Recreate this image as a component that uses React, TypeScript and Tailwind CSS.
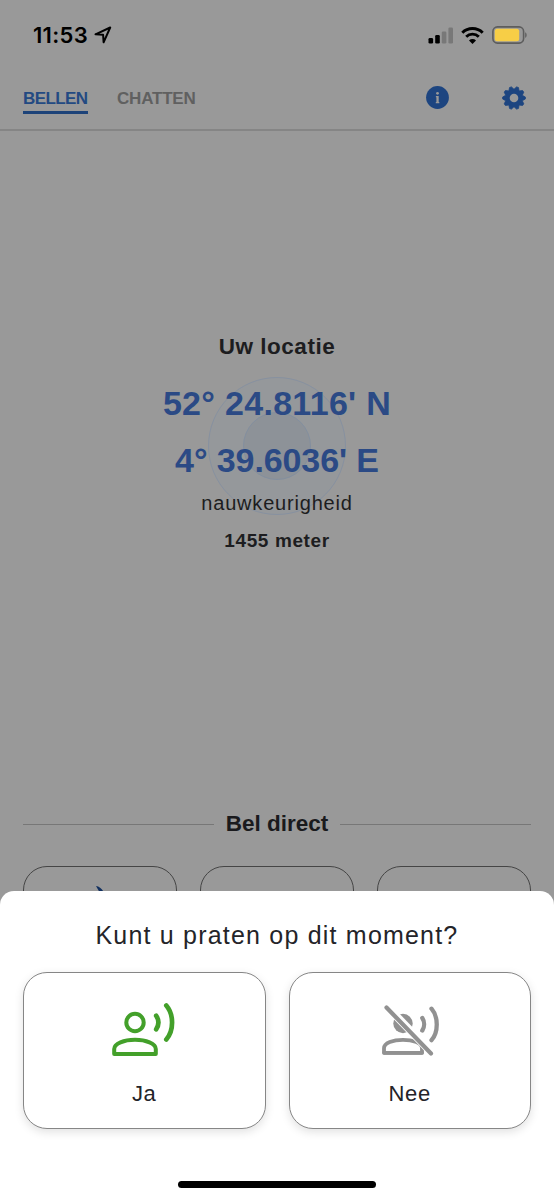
import type { ReactNode } from 'react';

const StatusBar = () => (
  <div className="flex h-[70px] items-center justify-between pl-[33px] pr-[27px] text-black">
    <div className="flex items-center gap-[6px]">
      <span className="font-[Inter,sans-serif] text-[22px] font-semibold leading-7 tracking-[0.3px]">11:53</span>
      <svg width="18" height="18" viewBox="0 0 18 18" fill="none">
        <path d="M1.5 8.3 16.2 1.5 9.6 16.3 9.1 8.8Z" stroke="currentColor" strokeWidth="2" strokeLinejoin="round" />
      </svg>
    </div>
    <div className="flex items-center gap-[8px]">
      <svg width="25" height="17" viewBox="0 0 25 17">
        <rect x="0.5" y="11" width="4.6" height="5.5" rx="1.3" />
        <rect x="7.2" y="8" width="4.6" height="8.5" rx="1.3" />
        <rect x="13.8" y="4.5" width="4.6" height="12" rx="1.3" fill="#787878" />
        <rect x="20.4" y="0.5" width="4.6" height="16" rx="1.3" fill="#787878" />
      </svg>
      <svg width="23" height="17" viewBox="0 0 23 17" fill="none">
        <path d="M1.3 5.7a14.6 14.6 0 0 1 20.4 0" stroke="currentColor" strokeWidth="3" />
        <path d="M5.2 9.7a9 9 0 0 1 12.6 0" stroke="currentColor" strokeWidth="2.9" />
        <path d="M11.5 17 8 13.4a5 5 0 0 1 7 0Z" fill="currentColor" />
      </svg>
      <svg width="35" height="18" viewBox="0 0 35 18" fill="none">
        <rect x="0.9" y="0.9" width="30.7" height="16.2" rx="4.5" stroke="#5d5d5d" strokeWidth="1.6" />
        <rect x="2.8" y="2.8" width="24.4" height="12.4" rx="2.5" fill="#f7ce46" />
        <path d="M33.2 6.2c1.9.7 1.9 4.900 0 5.6Z" fill="#5d5d5d" />
      </svg>
    </div>
  </div>
);

const point = (angle: number, radius: number) => {
  const rad = (angle * Math.PI) / 180;
  return `${(12 + radius * Math.sin(rad)).toFixed(2)},${(12 - radius * Math.cos(rad)).toFixed(2)}`;
};

// Ten teeth, 36 degrees apart
const gearPoints = Array.from({ length: 10 }, (_, i) => {
  const angle = 18 + i * 36;
  return [point(angle - 18, 8.7), point(angle - 5, 11.4), point(angle + 5, 11.4)].join(' ');
}).join(' ');

const Header = () => (
  <header className="flex h-[61px] items-start justify-between border-b-2 border-[#858585] pl-[23px] pr-[28px] text-[17px] font-bold leading-5">
    <nav className="flex gap-[29px] pt-[19px]">
      <span className="h-[25px] w-[65px] border-b-[3px] border-[#1d4379] tracking-[-0.6px] text-[#234a82]">BELLEN</span>
      <span className="tracking-[-0.2px] text-[#606060]">CHATTEN</span>
    </nav>
    <div className="flex gap-[53px] pt-[16px]">
      <svg width="24" height="24" viewBox="0 0 24 24">
        <circle cx="12.5" cy="11.5" r="11.4" fill="#1d4580" />
        <circle cx="12.5" cy="7.3" r="1.4" fill="#999" />
        <path d="M10.9 10h2.8v6h.6v1.200h-3.500v-1.200h.6v-4.800h-.5Z" fill="#999" />
      </svg>
      <svg width="24" height="24" viewBox="0 0 24 24">
        <polygon points={gearPoints} fill="#1d4580" stroke="#1d4580" strokeWidth="0.8" strokeLinejoin="round" />
        <circle cx="12" cy="12" r="4.3" fill="#999" />
      </svg>
    </div>
  </header>
);

const Location = () => (
  <section className="relative flex h-[676px] flex-col items-center pt-[200px] text-[#1d1d20]">
    <svg className="absolute left-[207px] top-[245px]" width="140" height="140" viewBox="0 0 140 140">
      <circle cx="70" cy="70" r="68.5" fill="#95989b" stroke="#8791a0" />
      <circle cx="70" cy="70" r="33.5" fill="#8d9298" stroke="#838f9f" />
    </svg>
    <h1 className="relative text-[22.5px] font-bold leading-8 tracking-[0.5px]">Uw locatie</h1>
    <div className="relative mt-[12px] whitespace-pre text-center text-[34px] font-bold leading-[57px] text-[#2b4a85]">
      <p className="tracking-[0.3px]">52° 24.8116' N</p>
      <p className="tracking-[-0.1px]">4° 39.6036' E</p>
    </div>
    <p className="relative text-[20px] leading-7 tracking-[0.8px]">nauwkeurigheid</p>
    <p className="relative mt-[10px] text-[19px] font-bold leading-7 tracking-[0.6px]">1455 meter</p>
  </section>
);

const DirectCall = () => (
  <section className="px-[23px]">
    <div className="flex h-[34px] items-center gap-[12px]">
      <div className="h-px flex-1 bg-[#777]" />
      <h2 className="text-[22.5px] font-bold leading-8 text-[#1a1a1d]">Bel direct</h2>
      <div className="h-px flex-1 bg-[#777]" />
    </div>
    <div className="mt-[25px] grid grid-cols-3 gap-[23px]">
      <div className="h-[158px] rounded-[24px] border border-[#454545] pl-[71px] pt-[18px]">
        <svg width="12" height="20" viewBox="0 0 12 20">
          <path d="M1 1c6 1 10 7 10 18L5 8Z" fill="#12305f" />
        </svg>
      </div>
      <div className="h-[158px] rounded-[24px] border border-[#454545]" />
      <div className="h-[158px] rounded-[24px] border border-[#454545]" />
    </div>
  </section>
);

const SpeakIcon = () => (
  <svg width="64" height="54" viewBox="0 0 64 54" fill="none" stroke="#43a02a" strokeWidth="4" strokeLinecap="round" strokeLinejoin="round">
    <circle cx="23" cy="19.5" r="8.7" />
    <path d="M2.2 51v-5C2.2 40.5 12 36.8 23 36.8S43.8 40.500 43.8 46v5Z" />
    <path d="M44.2 12.8c2.7 4 2.7 9.3 0 13.5" strokeWidth="4.7" />
    <path d="M54.3 2.5c7.7 9 7.7 25 0 34" strokeWidth="4.7" />
  </svg>
);

const MutedIcon = () => (
  <svg width="58" height="51" viewBox="0 0 58 51" fill="none" stroke="#919191" strokeWidth="3.8" strokeLinecap="round" strokeLinejoin="round">
    <circle cx="21" cy="18.5" r="9.7" fill="#919191" stroke="none" />
    <path d="M2 47.8v-4.5C2 38 11 34.8 21 34.8s19 3.2 19 8.5v4.5Z" />
    <path d="M40.3 13c2.4 3.6 2.4 8.7 0 12.5" strokeWidth="4.3" />
    <path d="M49.5 3.7c7 8 7 23.5 0 31.5" strokeWidth="4.3" />
    <path d="M5 1.500 50 48" stroke="#fff" strokeWidth="8" strokeLinecap="butt" />
    <path d="M2.200 47.800H40" />
    <path d="M4.5 2.5 49 48.5" strokeWidth="4.2" />
  </svg>
);

const Choice = ({ label, children }: { label: string; children: ReactNode }) => (
  <button className="flex h-[157px] flex-col items-center rounded-[24px] border border-[#868686] bg-white shadow-[0_3px_10px_rgba(0,0,0,0.12)]">
    <div className="flex h-[105px] items-center pt-[9px]">{children}</div>
    <span className="text-[22px] leading-8 tracking-[0.7px]">{label}</span>
  </button>
);

function App() {
  return (
    <div className="relative h-[1200px] w-[554px] overflow-hidden bg-[#999] font-['Liberation_Sans',Arial,sans-serif]">
      <StatusBar />
      <Header />
      <Location />
      <DirectCall />

      {/* Bottom sheet */}
      <div className="absolute inset-x-0 bottom-0 flex h-[309px] flex-col rounded-t-[14px] bg-white px-[23px] text-[#242429]">
        <h2 className="pt-[26px] text-center text-[25px] leading-9 tracking-[1.2px]">Kunt u praten op dit moment?</h2>
        <div className="mt-[19px] grid grid-cols-2 gap-[23px]">
          <Choice label="Ja">
            <SpeakIcon />
          </Choice>
          <Choice label="Nee">
            <div className="pl-[2px]">
              <MutedIcon />
            </div>
          </Choice>
        </div>
        <div className="mt-[52px] h-[7px] w-[198px] self-center rounded-full bg-black" />
      </div>
    </div>
  );
}

export default App;
